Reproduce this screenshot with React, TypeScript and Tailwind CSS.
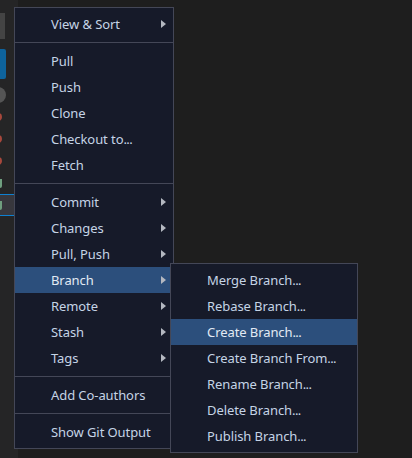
import React from 'react';

type Item = { label: string; sub?: boolean; active?: boolean; dots?: boolean };

const sections: Item[][] = [
  [{ label: 'View & Sort', sub: true }],
  [
    { label: 'Pull' },
    { label: 'Push' },
    { label: 'Clone' },
    { label: 'Checkout to', dots: true },
    { label: 'Fetch' },
  ],
  [
    { label: 'Commit', sub: true },
    { label: 'Changes', sub: true },
    { label: 'Pull, Push', sub: true },
    { label: 'Branch', sub: true, active: true },
    { label: 'Remote', sub: true },
    { label: 'Stash', sub: true },
    { label: 'Tags', sub: true },
  ],
  [{ label: 'Add Co-authors' }],
  [{ label: 'Show Git Output' }],
];

const branchItems: Item[] = [
  { label: 'Merge Branch', dots: true },
  { label: 'Rebase Branch', dots: true },
  { label: 'Create Branch', active: true, dots: true },
  { label: 'Create Branch From', dots: true },
  { label: 'Rename Branch', dots: true },
  { label: 'Delete Branch', dots: true },
  { label: 'Publish Branch', dots: true },
];

const MenuRow: React.FC<{ item: Item }> = ({ item }) => (
  <div className={`flex items-center justify-between h-[26px] pl-[36px] pr-[7px] ${item.active ? 'bg-[#2c4f7c] text-[#e2eaf4]' : 'text-[#c5d4e6]'}`}>
    <span className="whitespace-nowrap tracking-[-0.08px]">
      {item.label}
      {item.dots && <span className="tracking-[-0.6px]">...</span>}
    </span>
    {item.sub && (
      <svg width="5" height="8" viewBox="0 0 5 8" className="shrink-0">
        <path d="M0 0L5 4L0 8Z" fill="#b4b8c0" />
      </svg>
    )}
  </div>
);

const LeftStrip = () => (
  <div className="w-[18px] h-full bg-[#252526] overflow-hidden flex flex-col shrink-0">
    <div className="w-[5px] h-[26px] mt-[13px] bg-[#444444] shrink-0" />
    <div className="w-[6px] h-[30px] mt-[10px] bg-[#0e639c] rounded-r-[2px] shrink-0" />
    <div className="w-[16px] h-[16px] mt-[8px] -ml-[10px] bg-[#555555] rounded-full shrink-0" />
    <div className="w-[8px] h-[8px] mt-[10px] -ml-[6px] rounded-full bg-[#a8483c] shrink-0" />
    <div className="w-[8px] h-[8px] mt-[14px] -ml-[6px] rounded-full bg-[#a8483c] shrink-0" />
    <div className="w-[8px] h-[8px] mt-[14px] -ml-[6px] rounded-full bg-[#a8483c] shrink-0" />
    <div className="w-[2px] h-[9px] mt-[14px] bg-[#6f9f7f] rounded-br-[2px] shrink-0" />
    <div className="h-[22px] mt-[6px] w-full bg-[#37373d] border-y border-[#0e80d0] flex items-center shrink-0">
      <div className="w-[2px] h-[9px] bg-[#6f9f7f] rounded-br-[2px]" />
    </div>
  </div>
);

export default function App() {
  return (
    <div className="relative w-[412px] h-[458px] bg-[#1e1e1e] overflow-hidden text-[13px] leading-[26px] font-['Noto_Sans',sans-serif]">
      <LeftStrip />

      <div className="absolute left-[14px] top-[7px] w-[160px] bg-[#161a29] border border-[#444757] pt-[3px] pb-[3px]">
        {sections.map((rows, i) => (
          <div key={i} className={i > 0 ? 'border-t border-[#444757] mt-[5px] pt-[5px]' : ''}>
            {rows.map((item) => (
              <MenuRow key={item.label} item={item} />
            ))}
          </div>
        ))}
      </div>

      <div className="absolute left-[170px] top-[263px] w-[188px] bg-[#161a29] border border-[#444757] pt-[3px] pb-[3px]">
        {branchItems.map((item) => (
          <MenuRow key={item.label} item={item} />
        ))}
      </div>
    </div>
  );
}
